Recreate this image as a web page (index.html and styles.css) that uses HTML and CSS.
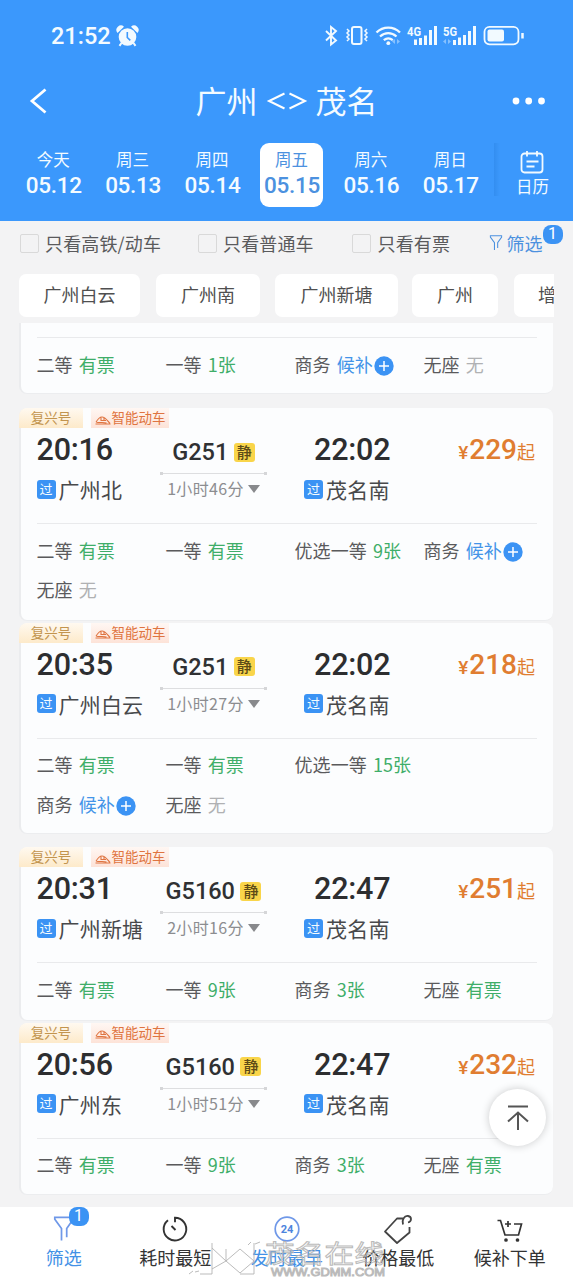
FILE: index.html
```html
<!DOCTYPE html>
<html lang="zh-CN">
<head>
<meta charset="utf-8">
<title>广州 - 茂名</title>
<link rel="stylesheet" href="styles.css">
</head>
<body>
<svg class="defs" width="0" height="0" aria-hidden="true">
  <symbol id="train" viewBox="0 0 16 9"><path d="M1 6.300C2.500 3.500 4.500 1 7 1c3.500 0 5.500 4 8 6.300M.5 8h15M6 1.300v3.200h5M9 2v2.500M1.500 6.300c4 .6 7-.3 10 .7" fill="none" stroke="currentColor" stroke-width="1.100"/></symbol>
  <symbol id="plus" viewBox="0 0 20 20"><circle cx="10" cy="10" r="9.700" fill="#3b93f4"/><path d="M10 5v10M5 10h10" stroke="#fff" stroke-width="1.500"/></symbol>
  <symbol id="funnel" viewBox="0 0 20 24"><path d="M7.700 22.500v-11L1.500 3V1.200h17V3l-6 8.500v8" fill="none" stroke="currentColor" stroke-width="1.600"/></symbol>
</svg>
<div class="app">
  <header class="header">
    <div class="status">
      <div class="clock">21:52
        <svg width="21" height="21" viewBox="0 0 21 21"><g fill="#f2faff"><circle cx="10.500" cy="11" r="8.800"/><path d="M.5 7A4.500 4.500 0 0 1 7 .8zM20.500 7A4.500 4.500 0 0 0 14 .8z"/></g><path d="M4.500 17l-2 2.800M16.500 17l2 2.800" stroke="#f2faff" stroke-width="2"/><path d="M10.300 6v5.500l3 2.800" fill="none" stroke="#3b98fc" stroke-width="1.600"/></svg>
      </div>
      <svg class="indicators" width="200" height="22" viewBox="0 0 200 22" fill="none" stroke="#f2faff">
        <path d="M2 6l10 9.500-5 4V2l5 4L2 15.500" stroke-width="1.900"/>
        <rect x="28" y="2" width="9.500" height="17" rx="2" stroke-width="2"/>
        <path d="M23 4l2 2-2 2 2 2-2 2 2 2-2 2M43 4l-2 2 2 2-2 2 2 2-2 2 2 2" stroke-width="1.500"/>
        <path d="M52.500 7.500c6.500-6.500 17-6.500 23.500 0M56 11.500c5-4.500 11.500-4.500 16.500 0M59.800 15.200c3-2.500 6-2.500 9 0" stroke-width="2.300"/>
        <circle cx="64.300" cy="18.200" r="1.900" fill="#f2faff" stroke="none"/>
        <path d="M71 14v5l-3-2.500zM73 14v5l3-2.500zM122 14v5l-3-2.500zM124 14v5l3-2.500z" fill="#86c1ff" stroke="none"/>
        <path d="M91.500 20v-5.500M96.500 20v-7M101.500 20v-9.500M106.500 20V5M111.500 20V1M130.500 20v-5M135.500 20v-7.500M140.500 20v-10M145.500 20V6M150.500 20V1" stroke-width="3"/>
        <rect x="160.500" y="1.800" width="34" height="17.500" rx="5" stroke-width="1.800"/>
        <rect x="163.500" y="4.500" width="16.500" height="12" rx="2" fill="#f2faff" stroke="none"/>
        <path d="M198.500 8v5.500" stroke-width="2.500"/>
        <g class="net" fill="#f2faff" stroke="none"><text x="83" y="10.500" textLength="14" lengthAdjust="spacingAndGlyphs">4G</text><text x="119" y="10.500" textLength="14" lengthAdjust="spacingAndGlyphs">5G</text></g>
      </svg>
    </div>
    <div class="titlebar">
      <svg width="20" height="28" viewBox="0 0 20 28"><path d="M18.500 2.500L5 14l13.500 11.500" fill="none" stroke="#fff" stroke-width="2.800"/></svg>
      <h1 class="title"><span>广州</span><svg width="40" height="20" viewBox="0 0 40 20"><path d="M17.500 2.500L2 10l15.500 7.500M22.500 2.500L38 10l-15.500 7.500" fill="none" stroke="#fff" stroke-width="2"/></svg><span>茂名</span></h1>
      <svg width="34" height="8" viewBox="0 0 34 8" fill="#fff"><circle cx="4" cy="4" r="3.400"/><circle cx="16.700" cy="4" r="3.400"/><circle cx="29.500" cy="4" r="3.400"/></svg>
    </div>
    <div class="dates">
      <div class="day"><span>今天</span><b>05.12</b></div>
      <div class="day"><span>周三</span><b>05.13</b></div>
      <div class="day"><span>周四</span><b>05.14</b></div>
      <div class="day active"><span>周五</span><b>05.15</b></div>
      <div class="day"><span>周六</span><b>05.16</b></div>
      <div class="day"><span>周日</span><b>05.17</b></div>
      <div class="calendar">
        <svg width="24" height="24" viewBox="0 0 24 24" fill="none" stroke="#f2faff" stroke-width="1.800"><rect x="1.500" y="3.500" width="21" height="19" rx="3"/><path d="M7 1v5.500M17 1v5.500M6.500 11.500h12M6.500 16.500h8"/></svg>
        <span>日历</span>
      </div>
    </div>
  </header>

  <div class="filters">
    <label class="check c1"><i class="box"></i>只看高铁/动车</label>
    <label class="check c2"><i class="box"></i>只看普通车</label>
    <label class="check c3"><i class="box"></i>只看有票</label>
    <div class="filter-btn"><svg width="14" height="16" viewBox="0 0 20 24"><use href="#funnel"/></svg>筛选<span class="count">1</span></div>
  </div>
  <div class="chips">
    <span class="chip w1">广州白云</span><span class="chip w2">广州南</span><span class="chip w3">广州新塘</span><span class="chip w4">广州</span><span class="chip w5">增城</span>
  </div>

  <main class="list">
    <section class="card partial">
      <div class="seats">
        <div>二等 <em>有票</em></div><div>一等 <em>1张</em></div><div>商务 <em class="wait">候补</em><svg class="add"><use href="#plus"/></svg></div><div>无座 <em class="none">无</em></div>
      </div>
    </section>

    <section class="card tall">
      <div class="tags"><span class="tag fx">复兴号</span><span class="tag zn"><svg width="16" height="9"><use href="#train"/></svg>智能动车</span></div>
      <div class="trip">
        <div class="from"><div class="time">20:16</div><div class="station"><i>过</i>广州北</div></div>
        <div class="mid"><div class="no">G251<i>静</i></div><div class="rail"></div><div class="dur">1小时46分<i></i></div></div>
        <div class="to"><div class="time">22:02</div><div class="station"><i>过</i>茂名南</div></div>
        <div class="price"><small>¥</small>229<span>起</span></div>
      </div>
      <div class="seats">
        <div>二等 <em>有票</em></div><div>一等 <em>有票</em></div><div>优选一等 <em>9张</em></div><div>商务 <em class="wait">候补</em><svg class="add"><use href="#plus"/></svg></div><div>无座 <em class="none">无</em></div>
      </div>
    </section>

    <section class="card tall second">
      <div class="tags"><span class="tag fx">复兴号</span><span class="tag zn"><svg width="16" height="9"><use href="#train"/></svg>智能动车</span></div>
      <div class="trip">
        <div class="from"><div class="time">20:35</div><div class="station"><i>过</i>广州白云</div></div>
        <div class="mid"><div class="no">G251<i>静</i></div><div class="rail"></div><div class="dur">1小时27分<i></i></div></div>
        <div class="to"><div class="time">22:02</div><div class="station"><i>过</i>茂名南</div></div>
        <div class="price"><small>¥</small>218<span>起</span></div>
      </div>
      <div class="seats">
        <div>二等 <em>有票</em></div><div>一等 <em>有票</em></div><div class="wide">优选一等 <em>15张</em></div><div>商务 <em class="wait">候补</em><svg class="add"><use href="#plus"/></svg></div><div>无座 <em class="none">无</em></div>
      </div>
    </section>

    <section class="card third">
      <div class="tags"><span class="tag fx">复兴号</span><span class="tag zn"><svg width="16" height="9"><use href="#train"/></svg>智能动车</span></div>
      <div class="trip">
        <div class="from"><div class="time">20:31</div><div class="station"><i>过</i>广州新塘</div></div>
        <div class="mid"><div class="no">G5160<i>静</i></div><div class="rail"></div><div class="dur">2小时16分<i></i></div></div>
        <div class="to"><div class="time">22:47</div><div class="station"><i>过</i>茂名南</div></div>
        <div class="price"><small>¥</small>251<span>起</span></div>
      </div>
      <div class="seats">
        <div>二等 <em>有票</em></div><div>一等 <em>9张</em></div><div>商务 <em>3张</em></div><div>无座 <em>有票</em></div>
      </div>
    </section>

    <section class="card">
      <div class="tags"><span class="tag fx">复兴号</span><span class="tag zn"><svg width="16" height="9"><use href="#train"/></svg>智能动车</span></div>
      <div class="trip">
        <div class="from"><div class="time">20:56</div><div class="station"><i>过</i>广州东</div></div>
        <div class="mid"><div class="no">G5160<i>静</i></div><div class="rail"></div><div class="dur">1小时51分<i></i></div></div>
        <div class="to"><div class="time">22:47</div><div class="station"><i>过</i>茂名南</div></div>
        <div class="price"><small>¥</small>232<span>起</span></div>
      </div>
      <div class="seats">
        <div>二等 <em>有票</em></div><div>一等 <em>9张</em></div><div>商务 <em>3张</em></div><div>无座 <em>有票</em></div>
      </div>
    </section>
  </main>

  <button class="totop" aria-label="top"><svg width="24" height="28" viewBox="0 0 24 28" fill="none" stroke="#555" stroke-width="2"><path d="M2 2.500h20M12 26V8.500M2 17.500l10-9 10 9"/></svg></button>

  <nav class="tabbar">
    <div class="tab on"><svg width="22" height="26" viewBox="0 0 20 24"><use href="#funnel"/></svg><span>筛选</span><b class="count">1</b></div>
    <div class="tab"><svg width="26" height="26" viewBox="0 0 26 26" fill="none" stroke="#333" stroke-width="1.900"><path d="M6 4.200A11.300 11.300 0 1 0 13 1.800v4.500M9.500 10l4 4"/></svg><span>耗时最短</span></div>
    <div class="tab on"><svg width="26" height="26" viewBox="0 0 26 26"><circle cx="13" cy="13" r="11.800" fill="none" stroke="#6f98e8" stroke-width="1.700"/><text class="h24" x="13" y="17" text-anchor="middle" fill="#4c84dd">24</text></svg><span>发时最早</span></div>
    <div class="tab"><svg width="30" height="30" viewBox="0 0 30 30" fill="none" stroke="#444" stroke-width="1.800" stroke-linejoin="round"><path d="M26.500 13v5.500L14 29 2 17.500 14 4.500h7M20 10.500c-1.500-5 1.500-9 5-8.500 4 .5 4 5.500 0 6.500"/></svg><span>价格最低</span></div>
    <div class="tab"><svg class="cart" width="26" height="24" viewBox="0 0 26 24" fill="none" stroke="#333" stroke-width="1.700"><path d="M.5 1.500h3l4.500 14.500h13.500L24.500 5H17M11 2v6M8 5h6"/><circle cx="9" cy="21" r="1" fill="#333"/><circle cx="20.500" cy="21" r="1" fill="#333"/></svg><span>候补下单</span></div>
    <svg class="mark" width="200" height="40" viewBox="0 0 200 40" fill="none" stroke="#b4b4b4" stroke-width="1">
      <path d="M24 3v31M24 8l14 13 14-12 14 12V3M24 29l14-8M38 21V9M38 21l14 12 14-12M52 34h14V21M12 34h12M1 34l4-3M7 32l4-1M60 5l3-3M67 4l5-2"/>
      <text class="mark-name" x="77" y="23" textLength="119" lengthAdjust="spacingAndGlyphs">茂名在线</text>
      <text class="mark-url" x="83" y="35.500" textLength="114" lengthAdjust="spacingAndGlyphs">WWW.GDMM.COM</text>
    </svg>
  </nav>
</div>
</body>
</html>
```

FILE: styles.css
```css
* { box-sizing: border-box; }
body { margin: 0; background: #f3f3f4; }
.defs { display: block; }
i, em { font-style: normal; }
.app {
  position: relative;
  width: 573px; height: 1280px;
  overflow: hidden;
  display: flex; flex-direction: column;
  font: 18px/24px "Noto Sans CJK SC", sans-serif;
  color: #5a5a5c;
}
svg { display: block; flex: none; overflow: visible; }

/* header */
.header { height: 221px; background: #3b98fc; color: #f4fbff; flex: none; }
.status { height: 72px; padding: 0 49px 0 51px; display: flex; align-items: center; justify-content: space-between; }
.clock { display: flex; align-items: center; gap: 6px; font: 500 23.500px/28px Roboto, sans-serif; }
.net { font: 700 12.500px Roboto, sans-serif; }
.titlebar { height: 57px; padding: 0 27px 0 27px; display: flex; align-items: center; justify-content: space-between; }
.title { margin: 0 0 0 14px; display: flex; align-items: center; gap: 9px; font-size: 31px; line-height: 40px; font-weight: 400; }
.title span { margin-top: -2px; }
.dates { display: flex; padding: 14px 0 0 13.500px; }
.day { width: 79.400px; height: 64px; display: flex; flex-direction: column; align-items: center; padding-top: 3.500px; border-radius: 9px; }
.day span { font-size: 16.500px; line-height: 25px; }
.day b { font: 500 22.500px/26px Roboto, sans-serif; letter-spacing: -.3px; margin-left: 1px; }
.day.active { width: 63.500px; margin: 0 8px; background: #fff; color: #4c91df; }
.calendar { flex: 1; margin-left: 4px; display: flex; flex-direction: column; align-items: center; padding: 7px 2px 0 0; height: 53px; background: linear-gradient(90deg, #338ef0, #3b98fc 6px); }
.calendar span { font-size: 16.500px; line-height: 25px; }

/* filter rows */
.filters { height: 53px; padding: 0 10px 9px 19.500px; display: flex; align-items: center; }
.check { display: flex; align-items: center; gap: 6.500px; white-space: nowrap; letter-spacing: .15px; }
.box { width: 19px; height: 19px; border: 1.500px solid #d9d9d9; border-radius: 2px; }
.c1 { width: 178px; }
.c2 { width: 154.500px; }
.c3 { width: 136.500px; }
.filter-btn { position: relative; display: flex; align-items: center; gap: 4px; color: #4c91df; white-space: nowrap; }
.count { position: absolute; width: 20px; height: 19px; border-radius: 8px; background: #3b93f4; color: #fff; font: 400 16px/18px Roboto, sans-serif; text-align: center; }
.filter-btn .count { left: 54px; top: -6.500px; }
.chips { margin: 0 19px 0 19px; display: flex; overflow: hidden; height: 43px; flex: none; }
.chip { flex: none; height: 43px; line-height: 40px; border-radius: 7px; background: #fff; text-align: center; color: #4f4f50; }
.w1 { width: 121px; margin-right: 16px; }
.w2 { width: 104px; margin-right: 15px; }
.w3 { width: 123px; margin-right: 14px; }
.w4 { width: 86px; margin-right: 15.500px; }
.w5 { width: 85px; }

/* train cards */
.list { margin: 6px 20px 0 19px; }
.card { height: 172.500px; margin-bottom: 2px; background: #fcfdfe; border-radius: 8px; border-left: 2px solid #ebecee; border-bottom: 1px solid #ecedef; }
.card.partial { height: 71px; padding-top: 14px; border-radius: 0 0 8px 8px; margin-bottom: 14px; }
.card.tall { height: 212.500px; }
.card.second { height: 211px; margin-bottom: 13.500px; }
.card.third { height: 173.500px; }
.tags { display: flex; gap: 8px; height: 20px; margin-left: -2px; }
.tag { height: 20px; font-size: 13.500px; line-height: 18.500px; display: flex; align-items: center; justify-content: center; padding-bottom: 1.500px; }
.fx { width: 64px; background: linear-gradient(#fff9f0, #fdeaca); color: #c2944e; border-radius: 8px 0 0 0; }
.zn { width: 78px; background: linear-gradient(#fff7f3, #fde3d8); color: #df7440; gap: 1px; }
.zn svg { margin-top: 6px; }
.trip { height: 95px; display: grid; grid-template-columns: 123.500px 107px 37px 1fr 110px; margin: 0 18px 0 15.500px; }
.trip .to { grid-column: 4; }
.time { font: 500 30.500px/43px Roboto, sans-serif; letter-spacing: -.2px; color: #2d2e30; }
.to .time { padding-left: 10px; }
.station { display: flex; align-items: center; gap: 3px; font-size: 21px; line-height: 36px; color: #48494b; white-space: nowrap; letter-spacing: .2px; }
.station i { width: 19px; height: 19px; border-radius: 3px; background: #3b93f4; color: #f4fbff; font-size: 13px; line-height: 18.500px; text-align: center; letter-spacing: 0; }
.mid { display: flex; flex-direction: column; align-items: center; padding-top: 11px; }
.no { display: flex; align-items: center; gap: 5.500px; font: 500 23.500px/26px Roboto, sans-serif; color: #303133; }
.no i { width: 21px; height: 19px; border-radius: 3px; background: #f9d54a; font: 500 15px/17.500px "Noto Sans CJK SC", sans-serif; color: #5c4b17; text-align: center; }
.rail { width: 107px; height: 3px; margin-top: 7px; background: radial-gradient(circle at 1.500px 1.500px, #d5d6d8 1.500px, transparent 2px), radial-gradient(circle at 105.500px 1.500px, #d5d6d8 1.500px, transparent 2px), linear-gradient(transparent 1px, #dddee0 1px, #dddee0 2px, transparent 2px); }
.dur { display: flex; align-items: center; gap: 4px; font-size: 16px; line-height: 26px; color: #8c8d90; white-space: nowrap; letter-spacing: .35px; }
.dur i { border: 6px solid transparent; border-top: 8px solid #88898c; border-bottom: 0; margin-top: 2px; }
.price { font: 500 28px/44px Roboto, sans-serif; color: #e07d31; text-align: right; white-space: nowrap; }
.price small { font-size: 19px; margin-right: 1px; }
.price span { font: 400 18px/24px "Noto Sans CJK SC", sans-serif; }
.seats { margin: 0 15.500px; border-top: 1px solid #e9eaec; padding-top: 6px; display: grid; grid-template-columns: repeat(4, 129px); grid-auto-rows: 39.500px; width: 500px; align-items: center; white-space: nowrap; }
.seats div { display: flex; align-items: center; gap: 6px; letter-spacing: .1px; }
.seats em { color: #3fae69; }
.seats em.wait { color: #4394e8; }
.seats em.none { color: #b0b1b3; }
.add { width: 20px; height: 20px; margin: 4px 0 0 -4.500px; }
.seats .wide { grid-column: span 2; }

/* floating button */
.totop { position: absolute; left: 489px; top: 1089px; width: 57px; height: 57px; border: 0; padding: 0; border-radius: 50%; background: #fff; box-shadow: 0 0 8px rgba(0,0,0,.2); display: grid; place-items: center; }

/* bottom bar */
.tabbar { position: absolute; left: 0; right: 0; bottom: 0; height: 73.500px; background: #fff; padding: 0 8px; display: grid; grid-template-columns: repeat(5, 111.500px); }
.tab { position: relative; display: grid; grid-template-rows: 37px 24px; justify-items: center; align-items: center; align-content: start; padding-top: 1px; color: #333; }
.tab svg { margin-top: 6px; }
.tab svg.cart { margin-top: 10px; }
.tab.on { color: #4391e6; }
.tab.on svg { color: #6f98e8; }
.tab .count { left: 60.500px; top: 0; }
.h24 { font: 700 11px Roboto, sans-serif; }
.mark { position: absolute; left: 188px; top: 33px; opacity: .9; }
.mark-name { font: 400 25px "Noto Sans CJK SC", sans-serif; }
.mark-url { font: 400 11.500px "Liberation Sans", sans-serif; }
```
